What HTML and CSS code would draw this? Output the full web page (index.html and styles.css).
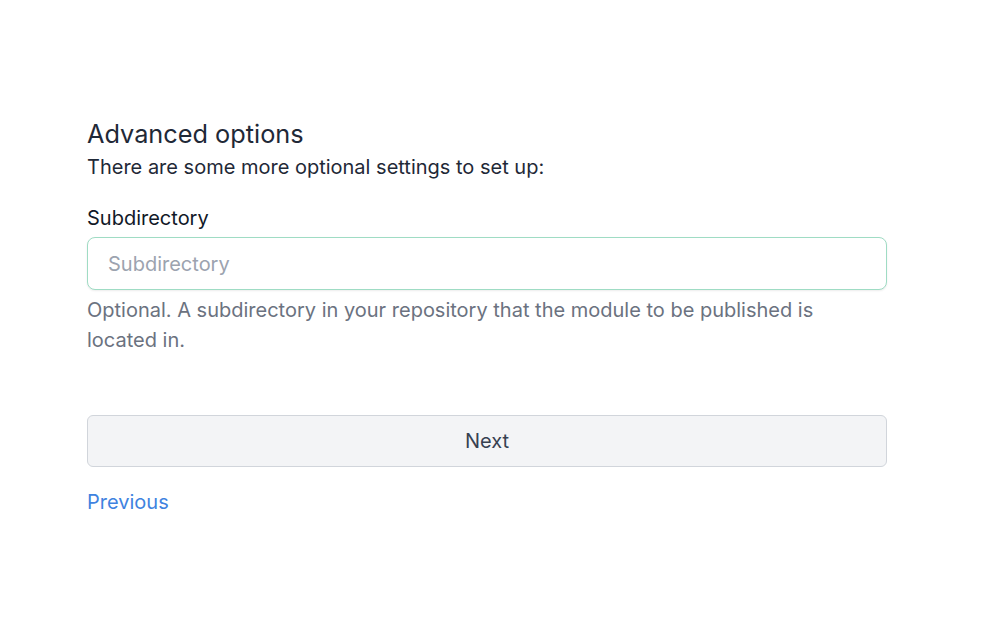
FILE: index.html
```html
<!DOCTYPE html>
<html lang="en">
<head>
<meta charset="utf-8">
<link rel="stylesheet" href="styles.css">
</head>
<body>
<main class="page">
  <h1 class="title">Advanced options</h1>
  <p class="subtitle">There are some more optional settings to set up:</p>
  <div class="field">
    <label class="label" for="subdir">Subdirectory</label>
    <input class="input" id="subdir" type="text" placeholder="Subdirectory">
    <p class="help">Optional. A subdirectory in your repository that the module to be published is located in.</p>
  </div>
  <button class="btn" type="button">Next</button>
  <a class="link" href="#">Previous</a>
</main>
</body>
</html>
```
FILE: styles.css
```css
html, body {
  margin: 0;
  padding: 0;
  background: #ffffff;
}
body {
  font-family: Inter, "Noto Sans", sans-serif;
  color: #1f2937;
}
.page {
  width: 800px;
  margin-left: 87px;
  padding-top: 118px;
  display: flex;
  flex-direction: column;
}
.title {
  margin: 0;
  font-size: 25.3px;
  line-height: 32px;
  font-weight: 400;
  color: #1f2937;
}
.subtitle {
  margin: 3px 0 0;
  font-size: 20px;
  line-height: 28px;
  color: #1f2937;
}
.field {
  margin-top: 23px;
  display: flex;
  flex-direction: column;
}
.label {
  font-size: 20px;
  line-height: 28px;
  color: #111827;
}
.input {
  margin-top: 5px;
  box-sizing: border-box;
  height: 53px;
  width: 100%;
  padding: 0 20px;
  border: 1px solid #9fdcc4;
  border-radius: 8px;
  box-shadow: 0 1px 2px rgba(0,0,0,0.08);
  font-family: inherit;
  font-size: 20px;
  color: #111827;
  outline: none;
}
.input::placeholder {
  color: #9ca3af;
}
.help {
  margin: 5px 0 0;
  font-size: 20px;
  line-height: 30px;
  color: #6b7280;
}
.btn {
  margin-top: 60px;
  box-sizing: border-box;
  height: 52px;
  width: 100%;
  background: #f3f4f6;
  border: 1px solid #d1d5db;
  border-radius: 6px;
  font-family: inherit;
  font-size: 20px;
  color: #374151;
  cursor: pointer;
}
.link {
  margin-top: 21px;
  align-self: flex-start;
  font-size: 20px;
  line-height: 28px;
  color: #3f83e0;
  text-decoration: none;
}
```
